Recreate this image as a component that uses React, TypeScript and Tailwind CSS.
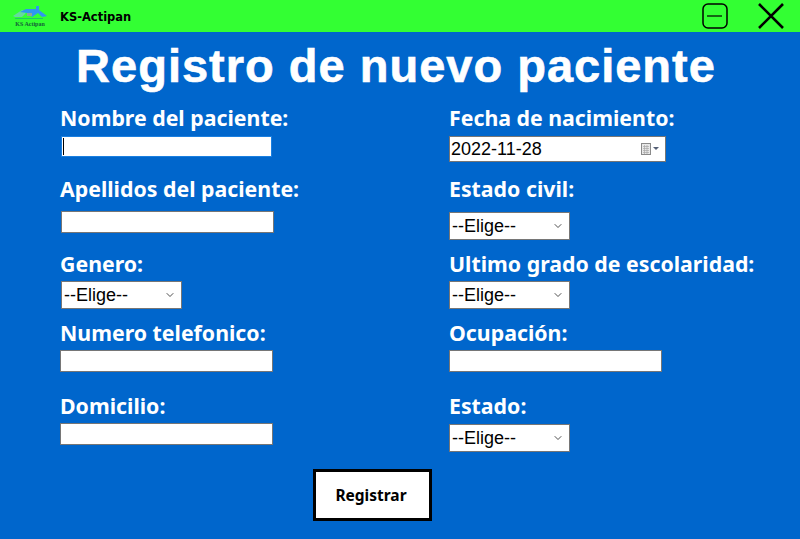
import { ChevronDown } from 'lucide-react';

const labelFont = "font-['Noto_Sans',sans-serif] font-bold text-[21.3px] leading-[24px] text-white whitespace-nowrap";
const controlFont = "font-['Liberation_Sans',sans-serif] text-[18px] text-black";

function Logo() {
  return (
    <div className="flex w-[36px] shrink-0 flex-col items-center">
      <svg width="36" height="14" viewBox="0 0 36 14" className="block">
        <path d="M1 10 L10 4 L15 4 L13 8 L10 11 L3 11 Z" fill="#66d8a0" />
        <path d="M8 6 L14 3 L24 3 L24 0 L27 0 L27 4 L35 10 L30 11 L26 7 L20 11 L15 7 Z" fill="#2f97ee" />
        <rect x="15" y="7" width="5" height="3" fill="#88a898" />
        <path d="M3 12.5 H31" stroke="#22c766" strokeWidth="1" />
      </svg>
      <span className="mt-[1px] font-['Liberation_Serif',serif] text-[6px] font-bold leading-[6px] text-[#14603a]">KS Actipan</span>
    </div>
  );
}

function TitleBar() {
  return (
    <div className="flex h-8 items-center bg-[#33ff33] pl-3">
      <Logo />
      <span className="ml-3 mt-[3px] font-['DejaVu_Sans',sans-serif] text-[11.5px] font-bold text-black">KS-Actipan</span>
      <div className="ml-auto flex items-center gap-[30px] pr-4">
        <svg width="26" height="26" viewBox="0 0 26 26" fill="none" stroke="#000" strokeWidth="1.5">
          <rect x="1" y="1" width="24" height="24" rx="5" />
          <path d="M5 13 H20" strokeWidth="1.2" />
        </svg>
        <svg width="26" height="26" viewBox="0 0 26 26" fill="none" stroke="#000" strokeWidth="2.6">
          <path d="M1 1 L25 25 M25 1 L1 25" />
        </svg>
      </div>
    </div>
  );
}

function TextBox({ className }: { className: string }) {
  return <input type="text" className={`block bg-white outline-none ${controlFont} ${className}`} />;
}

function Select({ className = '' }: { className?: string }) {
  return (
    <div className={`relative h-7 w-[121px] ${className}`}>
      <select className={`block h-full w-full appearance-none border border-[#767676] bg-white pl-[2px] outline-none ${controlFont}`}>
        <option>--Elige--</option>
      </select>
      <ChevronDown className="pointer-events-none absolute right-[6px] top-[8px] h-3 w-3 text-[#222]" strokeWidth={1.6} />
    </div>
  );
}

function DateBox() {
  return (
    <div className="relative mt-[6px] h-[26px] w-[217px]">
      <input
        type="text"
        readOnly
        value="2022-11-28"
        className={`block h-full w-full border border-[#767676] bg-white pl-px outline-none ${controlFont}`}
      />
      <svg width="22" height="14" viewBox="0 0 22 14" className="absolute right-[4px] top-[6px]">
        <rect x="1.5" y="1.5" width="9" height="11" fill="#e8e8e8" stroke="#8a8a8a" />
        <path d="M3 4.5 H9 M3 6.5 H9 M3 8.5 H9 M3 10.5 H9 M4.5 3 V12 M7 3 V12" stroke="#a8a8a8" strokeWidth="0.7" />
        <path d="M13 5 H19 L16 8 Z" fill="#555f75" />
      </svg>
    </div>
  );
}

export default function App() {
  return (
    <div className="flex h-[539px] w-[800px] flex-col overflow-hidden bg-[#0066cc]">
      <TitleBar />
      <h1 className="mt-1 h-[60px] pr-2 text-center font-['Liberation_Sans',sans-serif] text-[47px] font-bold leading-[60px] tracking-[1px] text-white [-webkit-text-stroke:0.6px_white]">
        Registro de nuevo paciente
      </h1>
      <div className="mt-[10px] grid grid-cols-[389px_1fr] pl-[60px]">
        <div className="flex flex-col">
          <div className={labelFont}>Nombre del paciente:</div>
          <div className="relative ml-px mt-[6px] w-[211px]">
            <TextBox className="h-[21px] w-[211px] border border-[#1a7fe0]" />
            <div className="absolute left-[2px] top-[2px] h-[17px] w-px bg-black" />
          </div>
          <div className={`mt-5 ${labelFont}`}>Apellidos del paciente:</div>
          <TextBox className="ml-px mt-[10px] h-[22px] w-[213px] border border-[#767676]" />
          <div className={`mt-[19px] ${labelFont}`}>Genero:</div>
          <Select className="ml-px mt-[5px]" />
          <div className={`mt-3 ${labelFont}`}>Numero telefonico:</div>
          <TextBox className="mt-[5px] h-[22px] w-[213px] border border-[#767676]" />
          <div className={`mt-[22px] ${labelFont}`}>Domicilio:</div>
          <TextBox className="mt-[5px] h-[22px] w-[213px] border border-[#767676]" />
        </div>
        <div className="flex flex-col">
          <div className={labelFont}>Fecha de nacimiento:</div>
          <DateBox />
          <div className={`mt-[15px] ${labelFont}`}>Estado civil:</div>
          <Select className="mt-[11px]" />
          <div className={`mt-3 ${labelFont}`}>Ultimo grado de escolaridad:</div>
          <Select className="mt-[5px]" />
          <div className={`mt-3 ${labelFont}`}>Ocupación:</div>
          <TextBox className="mt-[5px] h-[22px] w-[213px] border border-[#767676]" />
          <div className={`mt-[22px] ${labelFont}`}>Estado:</div>
          <Select className="mt-1.5" />
        </div>
      </div>
      <div className="mt-[17px] pl-[313px]">
        <button className="h-[52px] w-[119px] border-[3px] border-black bg-white pr-[3px] pt-px font-['Noto_Sans',sans-serif] text-[15.5px] font-bold text-black">
          Registrar
        </button>
      </div>
    </div>
  );
}
